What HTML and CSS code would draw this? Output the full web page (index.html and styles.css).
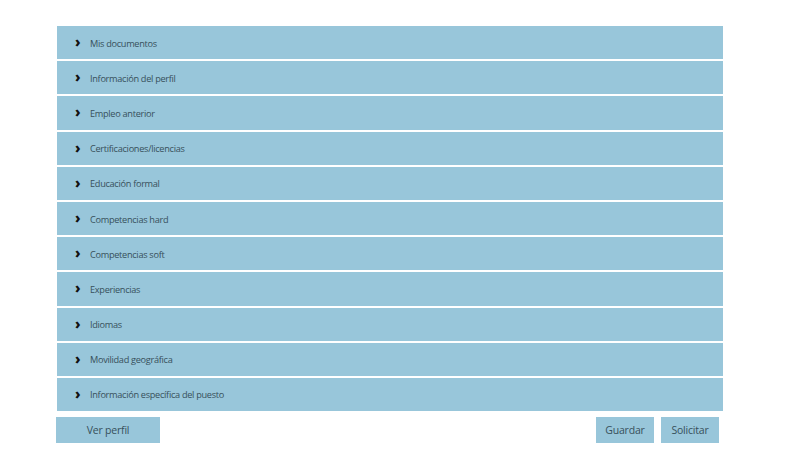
FILE: index.html
```html
<!DOCTYPE html>
<html lang="es">
<head>
<meta charset="utf-8">
<title>Perfil</title>
<link rel="stylesheet" href="styles.css">
</head>
<body>
<div class="page">
  <ul class="sections">
    <li class="section"><span class="chev">›</span><span class="label">Mis documentos</span></li>
    <li class="section"><span class="chev">›</span><span class="label">Información del perfil</span></li>
    <li class="section"><span class="chev">›</span><span class="label">Empleo anterior</span></li>
    <li class="section"><span class="chev">›</span><span class="label">Certificaciones/licencias</span></li>
    <li class="section"><span class="chev">›</span><span class="label">Educación formal</span></li>
    <li class="section"><span class="chev">›</span><span class="label">Competencias hard</span></li>
    <li class="section"><span class="chev">›</span><span class="label">Competencias soft</span></li>
    <li class="section"><span class="chev">›</span><span class="label">Experiencias</span></li>
    <li class="section"><span class="chev">›</span><span class="label">Idiomas</span></li>
    <li class="section"><span class="chev">›</span><span class="label">Movilidad geográfica</span></li>
    <li class="section"><span class="chev">›</span><span class="label">Información específica del puesto</span></li>
  </ul>
  <div class="actions">
    <button class="btn btn-wide">Ver perfil</button>
    <div class="right">
      <button class="btn">Guardar</button>
      <button class="btn">Solicitar</button>
    </div>
  </div>
</div>
</body>
</html>
```
FILE: styles.css
```css
html, body {
  margin: 0;
  padding: 0;
  background: #ffffff;
}
body {
  font-family: "Open Sans", "Liberation Sans", sans-serif;
}
.page {
  width: 666px;
  padding: 26px 0 0 57px;
}
.sections {
  list-style: none;
  margin: 0;
  padding: 0;
  display: flex;
  flex-direction: column;
  gap: 2px;
}
.section {
  height: 33.2px;
  background: #98c6da;
  display: flex;
  align-items: center;
  padding-left: 18px;
  color: #37505b;
  font-size: 9.2px;
}
.chev {
  width: 15px;
  color: #111;
  font-weight: 800;
  font-size: 14px;
  line-height: 1;
  margin-top: -1px;
}
.label {
  letter-spacing: -0.3px;
  padding-top: 1px;
}
.actions {
  display: flex;
  justify-content: space-between;
  margin-top: 6px;
  margin-left: -1px;
  width: 663px;
}
.right {
  display: flex;
  gap: 7px;
}
.btn {
  border: 0;
  margin: 0;
  height: 26px;
  width: 58px;
  background: #98c6da;
  color: #37505b;
  font-family: "Open Sans", "Liberation Sans", sans-serif;
  font-size: 10.5px;
  letter-spacing: -0.2px;
  padding: 0;
}
.btn-wide {
  width: 104px;
}
```
